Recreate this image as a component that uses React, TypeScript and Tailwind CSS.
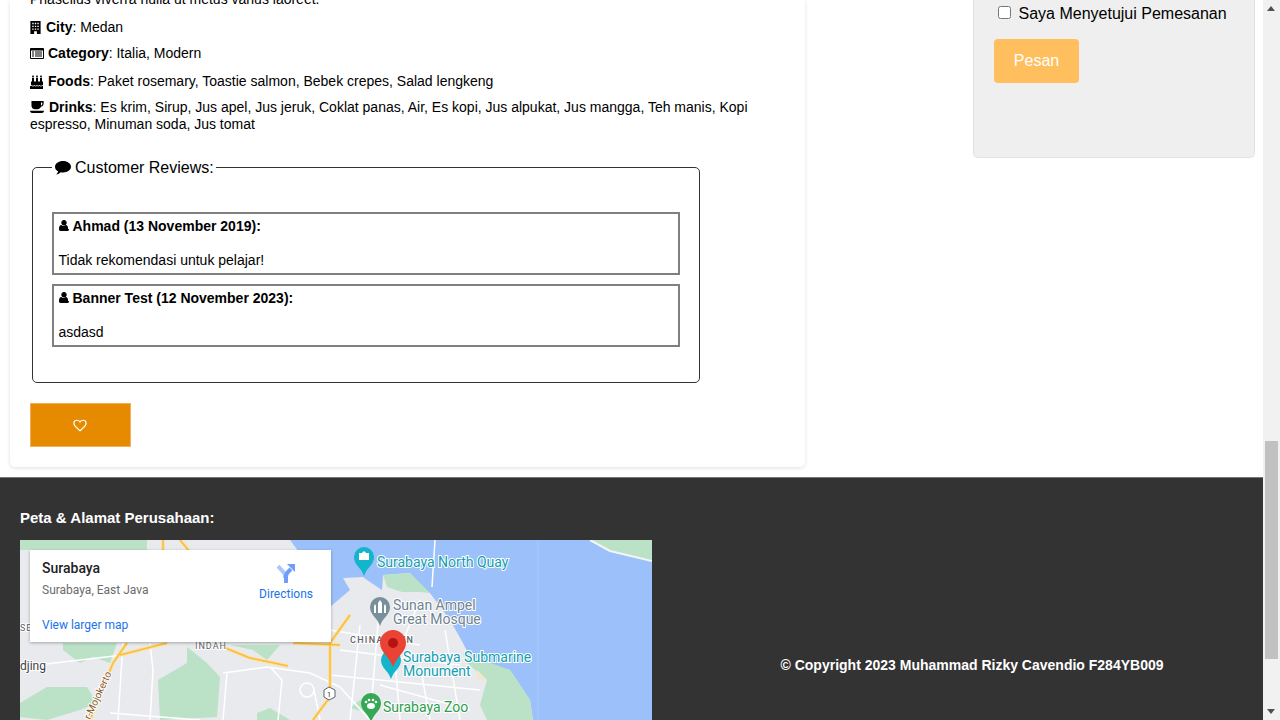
const reviews = [
  { name: "Ahmad (13 November 2019):", text: "Tidak rekomendasi untuk pelajar!" },
  { name: "Banner Test (12 November 2023):", text: "asdasd" },
];

const BuildingIcon = () => (
  <svg viewBox="0 0 11 14" className="inline-block h-[13px] w-[11px] shrink-0">
    <path d="M0 0H11V14H0Z" fill="#000000" />
    <path d="M2 2h1.500v1.500H2ZM4.750 2h1.500v1.500h-1.500ZM7.500 2H9v1.500H7.500ZM2 5h1.500v1.500H2ZM4.750 5h1.500v1.500h-1.500ZM7.500 5H9v1.500H7.500ZM2 8h1.500v1.500H2ZM4.750 8h1.500v1.500h-1.500ZM7.500 8H9v1.500H7.500ZM4 11h3v3H4Z" fill="#ffffff" />
  </svg>
);

const ListIcon = () => (
  <svg viewBox="0 0 14 11" className="inline-block h-[11px] w-[14px] shrink-0">
    <rect width="14" height="11" rx="1" fill="#000000" />
    <path d="M1 2.500H13V10H1Z" fill="#ffffff" />
    <path d="M2 3.500h2v1H2ZM5 3.500h7v1H5ZM2 5.500h2v1H2ZM5 5.500h7v1H5ZM2 7.500h2v1H2ZM5 7.500h7v1H5Z" fill="#000000" />
  </svg>
);

const CakeIcon = () => (
  <svg viewBox="0 0 14 14" className="inline-block h-[14px] w-[14px] shrink-0">
    <path d="M2 3H4V7H2ZM6 3H8V7H6ZM10 3H12V7H10Z" fill="#000000" />
    <path d="M3 0l1 1.500-1 1.500-1-1.500ZM7 0l1 1.500-1 1.500-1-1.500ZM11 0l1 1.500-1 1.500-1-1.500Z" fill="#000000" />
    <path d="M1 6.500H13V14H14H0V11H1Z" fill="#000000" />
    <path d="M1 10C3 11 3.500 11 4.500 10C5.500 11 6 11 7 10C8 11 8.500 11 9.500 10C10.500 11 11 11 13 10V10.800C11 11.800 10.500 11.800 9.500 10.800C8.500 11.800 8 11.800 7 10.800C6 11.800 5.500 11.800 4.500 10.800C3.500 11.800 3 11.800 1 10.800Z" fill="#ffffff" />
  </svg>
);

const CoffeeIcon = () => (
  <svg viewBox="0 0 15 13" className="mr-[5px] inline-block h-[12px] w-[14px] align-[-1px]">
    <path d="M1.500 0H14.500C15.200 2.500 14.500 6 11.800 6.300C11 8 10 9 8 9H5C2.500 9 1.500 7 1.500 5Z" fill="#000000" />
    <path d="M11.800 1.500H13.200C13.500 3 13 4.500 11.800 4.800Z" fill="#ffffff" />
    <path d="M0 10.500H15V11.500C14.500 12.500 14 13 13 13H2C1 13 .5 12.500 0 11.500Z" fill="#000000" />
  </svg>
);

const CommentIcon = () => (
  <svg viewBox="0 0 16 14" className="mr-1 inline-block h-[14px] w-4 align-[-2px]">
    <path d="M8 0C12.400 0 16 2.500 16 5.700C16 8.900 12.400 11.400 8 11.400C7.200 11.400 6.500 11.300 5.800 11.200C4.600 12.300 2.800 13.300 1.300 13.600C2 12.700 2.900 11.500 3.100 10.300C1.200 9.300 0 7.600 0 5.700C0 2.500 3.600 0 8 0Z" fill="#000000" />
  </svg>
);

const UserIcon = () => (
  <svg viewBox="0 0 1408 1792" className="mr-1 inline-block h-[13px] w-[10px] align-[-1px]">
    <path d="M1408 1399q0 109-62.500 187t-150.500 78h-982q-88 0-150.500-78t-62.500-187q0-85 8.500-160.500t31.500-152 58.500-131 94-89 134.500-34.500q131 128 313 128t313-128q76 0 134.500 34.500t94 89 58.500 131 31.500 152 8.500 160.500zm-320-887q0 159-112.500 271.500t-271.500 112.500-271.500-112.500-112.500-271.500 112.500-271.500 271.500-112.500 271.500 112.500 112.500 271.500z" fill="#000000" />
  </svg>
);

const HeartIcon = () => (
  <svg viewBox="0 0 16 14" className="h-[13px] w-[14px]">
    <path d="M8 13C5 10.500 1 7.500 1 4.500C1 2.500 2.500 1 4.500 1C6 1 7.300 1.800 8 3C8.700 1.800 10 1 11.500 1C13.500 1 15 2.500 15 4.500C15 7.500 11 10.500 8 13Z" fill="none" stroke="#ffffff" strokeWidth="1.400" />
  </svg>
);

const Pin = ({ cx, top, fill }: { cx: number; top: number; fill: string }) => (
  <path d={`M${cx - 10} ${top + 10}a10 10 0 0 1 20 0c0 8-7 10-10 19c-3-9-10-11-10-19Z`} fill={fill} />
);

const mapFont = "Roboto, sans-serif";
const highways = "M107 103L93 123L70 180M100 115L147 103M203 107L230 118L268 126M273 103L320 105M310 103L310 157L293 180M330 75L310 103M143 0V12M160 0L170 12";

const MapDrawing = () => (
  <svg viewBox="0 0 632 180" className="block h-[180px] w-[632px]">
    <rect width="632" height="180" fill="#e8eaed" />
    {/* sea and harbour */}
    <path d="M260 0H632V180H513L510 160L490 130L453 123L443 103L430 80L410 53L400 48L390 33L363 35L362 50L347 40L343 37L323 38L330 50L310 67L300 40L270 0Z" fill="#9cc0f9" />
    <path d="M518 0V180" stroke="#a8c8fa" strokeWidth="1" />
    <path d="M570 0L590 11L632 20V0Z" fill="#bbe2c6" />
    <path d="M570 0L590 11L632 21" fill="none" stroke="#f4f5f6" strokeWidth="2" />
    {/* parks */}
    <path d="M363 35L390 33L410 53L400 52L382 52L367 47Z" fill="#bbe2c6" />
    <path d="M443 113L490 130L510 160L513 180H467L460 165L467 140L447 123Z" fill="#bbe2c6" />
    <path d="M457 130L467 140H457Z" fill="#f3e8cf" />
    <path d="M0 0H127V10H0Z" fill="#bbe2c6" />
    <path d="M210 105H260L247 120L233 110Z" fill="#bbe2c6" />
    <path d="M43 103H97L90 123L73 117L60 123L43 110Z" fill="#bbe2c6" />
    <path d="M167 107L187 123L200 137L197 177L140 180L138 140L167 123Z" fill="#bbe2c6" />
    <path d="M27 147H67L77 163L60 170L27 180L0 177V163Z" fill="#bbe2c6" />
    <path d="M237 173L250 168L270 180H237Z" fill="#bbe2c6" />
    <path d="M340 160L352 158L345 172L330 168Z" fill="#bbe2c6" />
    {/* streets */}
    <path d="M103 115L0 127M130 103L133 130L130 180M203 133L247 127L290 133L320 147M207 133L203 180M103 103L98 180M90 173L180 180M320 147L350 180M250 127L262 140L258 180M294 150L300 180" fill="none" stroke="#ffffff" strokeWidth="1.500" />
    <circle cx="287" cy="150" r="7" fill="none" stroke="#ffffff" strokeWidth="1.500" />
    <path d="M415 0L412 47M360 60L350 180M310 90L400 105M320 110L440 125M400 60L375 120L380 180M340 85L330 180M310 135L460 150M400 125L410 180M360 145L450 170M425 90L440 180" fill="none" stroke="#ffffff" strokeWidth="1.500" />
    {/* highways */}
    <path d={highways} fill="none" stroke="#fde293" strokeWidth="3.500" />
    <path d={highways} fill="none" stroke="#f9bb45" strokeWidth="1.500" />
    <path d="M309 147L315 150V157L309 160L304 157V150Z" fill="#ffffff" stroke="#5f6368" strokeWidth="1" />
    <text x="309" y="157" fontSize="8" textAnchor="middle" fill="#3c4043" fontFamily={mapFont}>1</text>
    {/* labels */}
    <g stroke="#ffffff" strokeWidth="2" paintOrder="stroke" fontFamily={mapFont}>
      <text x="0" y="130" fontSize="12" fill="#3c4043">djing</text>
      <text x="0" y="91" fontSize="9" letterSpacing="1" fill="#5f6368">SE</text>
      <text x="175" y="109" fontSize="9" letterSpacing="1" fill="#5f6368">INDAH</text>
      <text x="330" y="103" fontSize="9" fontWeight="500" letterSpacing="1.300" fill="#5f6368">CHINATOWN</text>
      <text x="70" y="180" fontSize="10" fill="#8a5a2b" transform="rotate(-65 70 180)">r-Mojokerto</text>
      <text x="357" y="27" fontSize="14" fill="#129eaf">Surabaya North Quay</text>
      <text x="373" y="70" fontSize="14" fill="#6f8391">Sunan Ampel</text>
      <text x="373" y="84" fontSize="14" fill="#6f8391">Great Mosque</text>
      <text x="383" y="122" fontSize="14" fill="#129eaf">Surabaya Submarine</text>
      <text x="383" y="136" fontSize="14" fill="#129eaf">Monument</text>
      <text x="363" y="172" fontSize="14" fill="#2e9d4e">Surabaya Zoo</text>
    </g>
    {/* markers */}
    <Pin cx={344} top={7} fill="#12b5cb" />
    <path d="M339 13h3l1-1.500h2l1 1.500h3v7h-10Z" fill="#ffffff" />
    <Pin cx={360} top={57} fill="#78909c" />
    <path d="M354 73V66l1-2 1 2V73ZM358 73V63l2-3 2 3V73ZM364 73V66l1-2 1 2V73Z" fill="#ffffff" />
    <Pin cx={371} top={110} fill="#12b5cb" />
    <Pin cx={351} top={153} fill="#34a853" />
    <ellipse cx="351" cy="166" rx="4" ry="3" fill="#ffffff" />
    <circle cx="346" cy="162" r="1.300" fill="#ffffff" />
    <circle cx="349" cy="160" r="1.300" fill="#ffffff" />
    <circle cx="353" cy="160" r="1.300" fill="#ffffff" />
    <circle cx="356" cy="162" r="1.300" fill="#ffffff" />
    <path d="M360 103a13 13 0 0 1 26 0c0 9-9 13-13 24c-4-11-13-15-13-24Z" fill="#ea4335" />
    <circle cx="373" cy="103" r="5" fill="#b31412" />
  </svg>
);

export default function App() {
  return (
    <div className="flex h-[720px] w-[1280px] overflow-hidden bg-white font-['Liberation_Sans',Arial,sans-serif] text-black">
      <div className="flex w-[1263px] flex-col">
        <main className="flex h-[477px] shrink-0 items-start overflow-hidden">
          <section className="ml-[10px] h-[467px] w-[795px] shrink-0 overflow-hidden rounded-b-[5px] bg-white pl-5 text-sm leading-[17px] shadow-[0_1px_4px_rgba(0,0,0,0.12)]">
            <p className="-mt-[9px]">Phasellus viverra nulla ut metus varius laoreet.</p>
            <p className="mt-[11px] flex items-center gap-[5px]"><BuildingIcon /><span><b>City</b>: Medan</span></p>
            <p className="mt-[9px] flex items-center gap-1"><ListIcon /><span><b>Category</b>: Italia, Modern</span></p>
            <p className="mt-[11px] flex items-center gap-1"><CakeIcon /><span><b>Foods</b>: Paket rosemary, Toastie salmon, Bebek crepes, Salad lengkeng</span></p>
            <p className="mt-[9px] w-[735px]"><CoffeeIcon /><b>Drinks</b>: Es krim, Sirup, Jus apel, Jus jeruk, Coklat panas, Air, Es kopi, Jus alpukat, Jus mangga, Teh manis, Kopi espresso, Minuman soda, Jus tomat</p>
            <fieldset className="mt-[24px] ml-[2px] h-[226px] w-[668px] rounded-[5px] border border-[#333333] pt-[35px] pr-[19px] pl-[19px]">
              <legend className="pt-[2px] pr-[2px] pl-[3px] text-base leading-[18px]"><CommentIcon />Customer Reviews:</legend>
              <div className="flex flex-col gap-[9px]">
                {reviews.map((review) => (
                  <div key={review.name} className="h-[63px] border-2 border-[#808080] pt-1 pr-1 pl-[4.5px]">
                    <p className="font-bold"><UserIcon />{review.name}</p>
                    <p className="mt-[17px]">{review.text}</p>
                  </div>
                ))}
              </div>
            </fieldset>
            <button className="mt-[20px] flex h-[44px] w-[101px] items-center justify-center border border-[#f0b060] bg-[#e68a00] pr-[1px]">
              <HeartIcon />
            </button>
          </section>
          <aside className="ml-[168px] h-[158px] w-[282px] shrink-0 rounded-b-[5px] border border-t-0 border-[#e2e2e2] bg-[#efefef] pl-5">
            <label className="flex h-[28px] items-start pt-[5px] text-base leading-[18px]">
              <input type="checkbox" className="mt-[1px] mr-[7.5px] ml-[4px] h-[13px] w-[13px]" />
              Saya Menyetujui Pemesanan
            </label>
            <button className="mt-[11px] h-[44px] w-[85px] rounded-[4px] bg-[#ffbf5e] text-base text-white">Pesan</button>
          </aside>
        </main>
        <footer className="flex h-[243px] border-t border-[#777777] bg-[#333333] pl-5 text-white">
          <div className="w-[632px] shrink-0">
            <h3 className="mt-[31px] text-[15px] leading-[17px] font-bold">Peta &amp; Alamat Perusahaan:</h3>
            <div className="relative mt-[14px] h-[180px] overflow-hidden">
              <MapDrawing />
              <div className="absolute top-[10px] left-[10px] h-[92px] w-[301px] bg-white font-['Roboto',sans-serif] shadow-[0_1px_3px_rgba(0,0,0,0.3)]">
                <p className="pt-[10px] pl-3 text-sm leading-4 font-medium text-[#202124]">Surabaya</p>
                <p className="pt-[6px] pl-3 text-xs leading-[16px] text-[#6b6b6b]">Surabaya, East Java</p>
                <p className="pt-[19px] pl-3 text-xs leading-[16px] text-[#1a73e8]">View larger map</p>
                <div className="absolute top-[14px] right-[18px] flex flex-col items-center text-xs leading-[16px] text-[#1a73e8]">
                  <svg viewBox="0 0 18 19" className="h-[19px] w-[18px]">
                    <path d="M1 2L8 10V14" fill="none" stroke="#a9c8fa" strokeWidth="4" />
                    <path d="M9 19V12C9 9 11 8 14 5" fill="none" stroke="#6f9ef8" strokeWidth="4" />
                    <path d="M10 0H18V8Z" fill="#6f9ef8" />
                  </svg>
                  <span className="mt-[3px]">Directions</span>
                </div>
              </div>
            </div>
          </div>
          <div className="flex-1 pt-[179px] pl-[29px] text-center text-sm leading-[17px] font-bold">© Copyright 2023 Muhammad Rizky Cavendio F284YB009</div>
        </footer>
      </div>
      <div className="relative w-[17px] shrink-0 bg-[#f1f1f1]">
        <div className="absolute top-[6px] left-[4px] h-0 w-0 border-x-[4.5px] border-b-[5px] border-x-transparent border-b-[#505050]" />
        <div className="absolute top-[441px] left-[2px] h-[218px] w-[13px] bg-[#c1c1c1]" />
        <div className="absolute bottom-[6px] left-[4px] h-0 w-0 border-x-[4.5px] border-t-[5px] border-x-transparent border-t-[#505050]" />
      </div>
    </div>
  );
}
